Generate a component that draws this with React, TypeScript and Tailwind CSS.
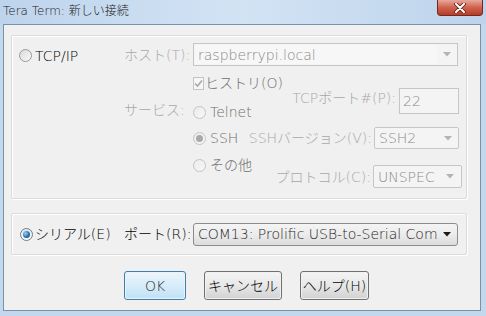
import React from "react";

const FONT = "font-['DejaVu_Sans','Noto_Sans_CJK_JP',sans-serif]";

function Arrow({ color }: { color: string }) {
  return (
    <svg width="8" height="5" viewBox="0 0 8 5" className="shrink-0">
      <polygon points="0,0 8,0 4,4.5" fill={color} />
    </svg>
  );
}

function Radio({ state }: { state: "off" | "offDisabled" | "onDisabled" | "on" }) {
  const ring =
    state === "on"
      ? "border-[#6b7f93] bg-linear-to-b from-[#e2e5e8] to-[#fbfbfb]"
      : state === "off"
      ? "border-[#9a9a9a] bg-linear-to-br from-[#d9d9d9] to-[#fafafa]"
      : "border-[#c4c4c4] bg-linear-to-br from-[#ebebeb] to-[#f8f8f8]";
  return (
    <div className={`w-[13px] h-[13px] rounded-full border shrink-0 flex items-center justify-center ${ring}`}>
      {state === "on" && (
        <div className="w-[7px] h-[7px] rounded-full bg-radial-[at_35%_35%] from-[#9fd3f5] via-[#2f79b6] to-[#173f66]" />
      )}
      {state === "onDisabled" && <div className="w-[7px] h-[7px] rounded-full bg-[#a9a9a9]" />}
    </div>
  );
}

function Btn({ label, w, def }: { label: string; w: string; def?: boolean }) {
  return (
    <div className={`${w} h-[29px] rounded-[3px] border p-px ${def ? "border-[#3c7fb1]" : "border-[#707070]"}`}>
      <div
        className={`h-full rounded-[2px] flex items-center justify-center ${
          def
            ? "bg-linear-to-b from-[#eaf5fc] via-[#d7ecf9] to-[#c2e2f6]"
            : "bg-linear-to-b from-[#f3f3f3] via-[#e8e8e8] to-[#d3d3d3]"
        }`}
      >
        <span className={def ? "text-[#2b2b2b]" : "text-black"}>{label}</span>
      </div>
    </div>
  );
}

function GroupBox({ className, children }: { className: string; children: React.ReactNode }) {
  return (
    <div className={`ml-[7px] w-[456px] border border-[#dcdcdc] rounded-[2px] shadow-[inset_1px_1px_0_#ffffff,1px_1px_0_#ffffff] ${className}`}>
      {children}
    </div>
  );
}

export default function App() {
  return (
    <div className={`w-[486px] h-[316px] flex flex-col bg-[#c3d7ed] text-[14px] font-light leading-none whitespace-nowrap text-black overflow-hidden ${FONT}`}>
      {/* Title bar */}
      <div className="h-[24px] shrink-0 flex items-start justify-between bg-linear-to-r from-[#bed4ec] via-[#d2e3f4] to-[#bdd3eb]">
        <span className="pl-[3px] pt-[5px] text-[12px] text-[#1a1a1a]">Tera Term: 新しい接続</span>
        <div className="mr-[3px] w-[46px] h-[16px] rounded-b-[4px] border border-t-0 border-[#6d2a22] bg-linear-to-b from-[#e7a79c] via-[#d0614d] to-[#b83c26] flex items-center justify-center">
          <svg width="12" height="10" viewBox="0 0 12 10">
            <path d="M2 1 L10 9 M10 1 L2 9" stroke="#5a1c12" strokeWidth="3.6" strokeLinecap="round" />
            <path d="M2 1 L10 9 M10 1 L2 9" stroke="#ffffff" strokeWidth="2" strokeLinecap="round" />
          </svg>
        </div>
      </div>

      {/* Client area */}
      <div className="flex-1 flex pl-[3px] pr-[5px] pb-[5px]">
        <div className="flex-1 border border-[#7a91ae] bg-[#f0f0f0] flex flex-col">
          {/* TCP/IP group */}
          <GroupBox className="mt-[10px] h-[164px] flex">
            <div className="w-[112px] pl-[7px] pt-[13px] flex items-start gap-[3px]">
              <Radio state="off" />
              <span className="leading-[14px]">TCP/IP</span>
            </div>
            <div className="flex-1 flex flex-col">
              {/* host row */}
              <div className="mt-[7px] h-[23px] flex items-center">
                <span className="w-[69px] text-[#a8a8a8]">ホスト(T):</span>
                <div className="w-[265px] h-full border border-[#c6c6c6] bg-[#f4f4f4] flex items-center pl-[1px] pr-[6px]">
                  <div className="flex-1 h-[19px] bg-[#f7f7f7] flex items-center pl-[3px] text-[#8a8a8a]">
                    raspberrypi.local
                  </div>
                  <div className="w-[14px] flex justify-end">
                    <Arrow color="#b4b4b4" />
                  </div>
                </div>
              </div>

              <div className="flex-1 flex">
                <span className="w-[69px] mt-[37px] text-[#a8a8a8]">サービス:</span>

                {/* service radios */}
                <div className="w-[52px] flex flex-col text-[#6e6e6e]">
                  <div className="mt-[9px] h-[16px] flex items-center">
                    <div className="w-[13px] h-[13px] border border-[#c4c4c4] bg-[#f6f6f6] flex items-center justify-center">
                      <svg width="9" height="9" viewBox="0 0 9 9">
                        <path d="M1 4.5 L3.5 7 L8 1.5" stroke="#a8a8a8" strokeWidth="1.6" fill="none" />
                      </svg>
                    </div>
                    <span className="ml-[1px]">ヒストリ(O)</span>
                  </div>
                  <div className="mt-[13px] h-[16px] flex items-center gap-[4px]">
                    <Radio state="offDisabled" />
                    <span>Telnet</span>
                  </div>
                  <div className="mt-[10px] h-[16px] flex items-center gap-[4px]">
                    <Radio state="onDisabled" />
                    <span>SSH</span>
                  </div>
                  <div className="mt-[11px] h-[16px] flex items-center gap-[4px]">
                    <Radio state="offDisabled" />
                    <span>その他</span>
                  </div>
                </div>

                {/* right column */}
                <div className="flex-1 flex flex-col items-end text-[#a8a8a8]">
                  <div className="mt-[22px] mr-[7px] h-[26px] flex items-start gap-[3px]">
                    <span className="mt-[3px]">TCPポート#(P):</span>
                    <div className="w-[60px] h-full border border-[#c6c6c6] bg-[#f4f4f4] pl-[3px] pt-[5px] text-[#8a8a8a]">
                      22
                    </div>
                  </div>
                  <div className="mt-[13px] mr-[7px] h-[22px] flex items-center gap-[2px]">
                    <span>SSHバージョン(V):</span>
                    <div className="w-[85px] h-full border border-[#c6c6c6] rounded-[2px] bg-[#f4f4f4] flex items-center justify-between pl-[4px] pr-[6px] text-[#8a8a8a]">
                      <span>SSH2</span>
                      <Arrow color="#b4b4b4" />
                    </div>
                  </div>
                  <div className="mt-[16px] mr-[4px] h-[23px] flex items-center gap-[2px]">
                    <span>プロトコル(C):</span>
                    <div className="w-[89px] h-full border border-[#c6c6c6] rounded-[2px] bg-[#f4f4f4] flex items-center justify-between pl-[4px] pr-[7px] text-[#8a8a8a]">
                      <span>UNSPEC</span>
                      <Arrow color="#b4b4b4" />
                    </div>
                  </div>
                </div>
              </div>
            </div>
          </GroupBox>

          {/* Serial group */}
          <GroupBox className="mt-[14px] h-[42px] flex items-center">
            <div className="w-[112px] pl-[8px] flex items-center gap-[2px]">
              <Radio state="on" />
              <span>シリアル(E)</span>
            </div>
            <span className="w-[69px]">ポート(R):</span>
            <div className="w-[265px] h-[23px] rounded-[3px] border border-[#8c8c8c] bg-linear-to-b from-[#f4f4f4] via-[#ececec] to-[#dcdcdc] flex items-center pl-[4px] pr-[6px] gap-[4px]">
              <span className="flex-1 overflow-hidden text-[#1e1e1e]">COM13: Prolific USB-to-Serial Com</span>
              <Arrow color="#1a1a1a" />
            </div>
          </GroupBox>

          {/* Buttons */}
          <div className="mt-[16px] ml-[120px] flex gap-[18px]">
            <Btn label="OK" w="w-[62px]" def />
            <Btn label="キャンセル" w="w-[78px]" />
            <Btn label="ヘルプ(H)" w="w-[69px]" />
          </div>
        </div>
      </div>
    </div>
  );
}
